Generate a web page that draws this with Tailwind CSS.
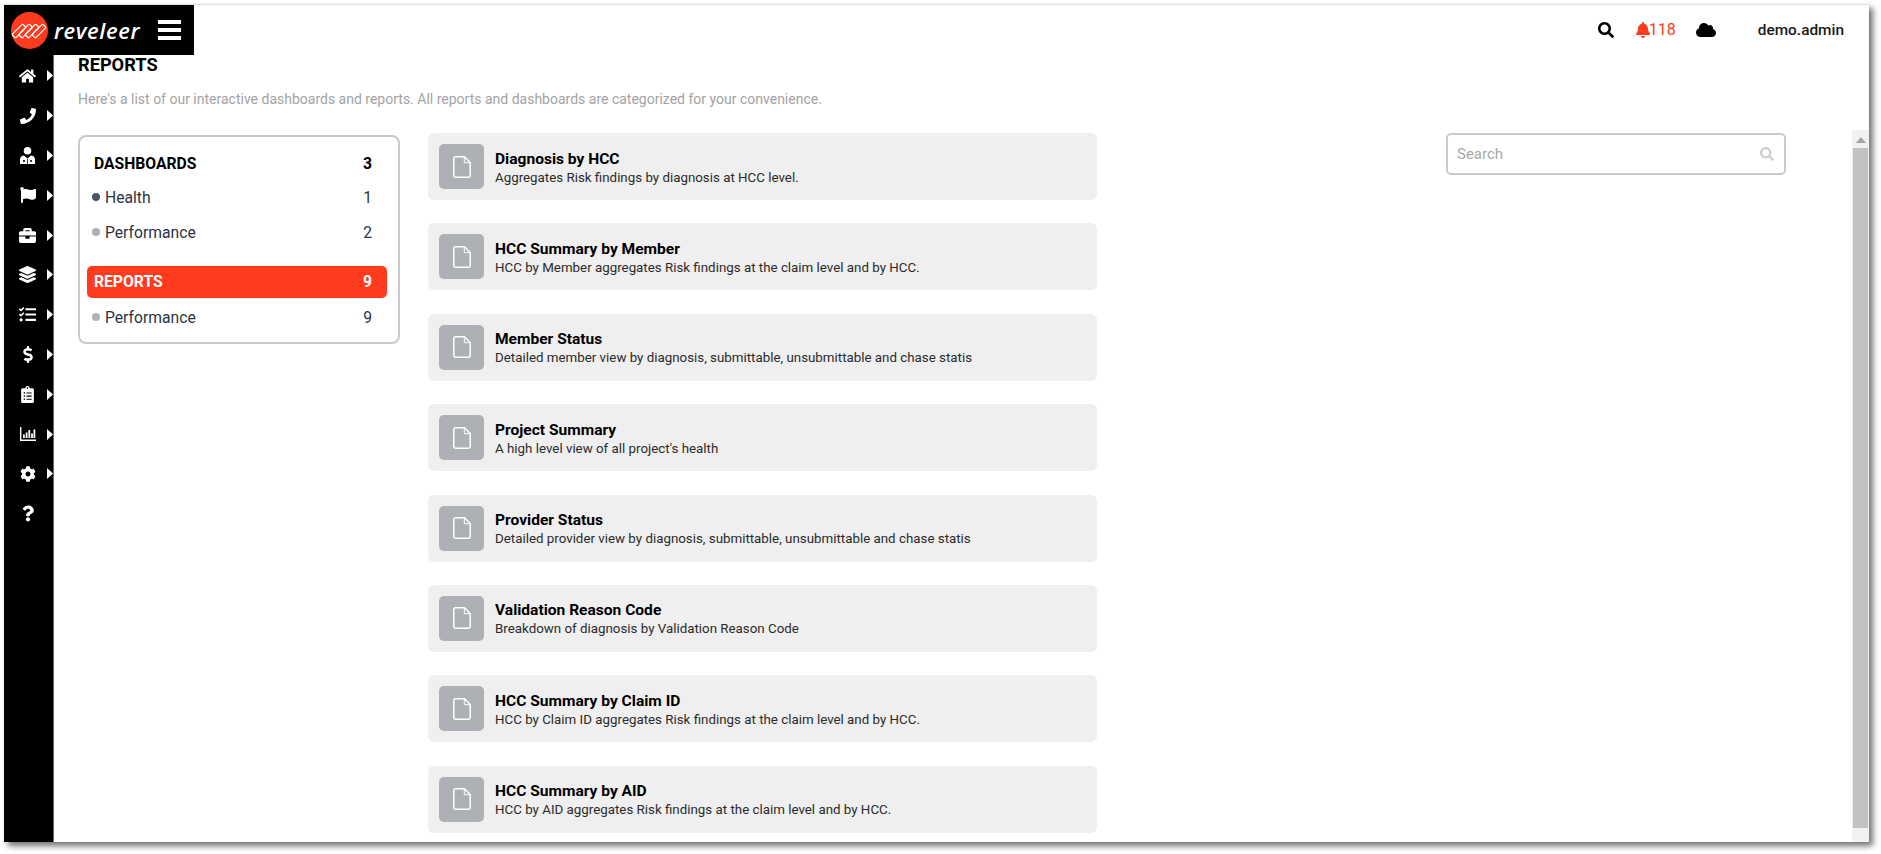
<!doctype html>
<html lang="en">
<head>
<meta charset="utf-8">
<title>Reports</title>
<script src="https://cdn.jsdelivr.net/npm/@tailwindcss/browser@4"></script>
</head>
<body class="bg-white font-['Roboto',sans-serif] overflow-hidden">
<svg width="0" height="0" class="absolute">
  <defs>
    <symbol id="doc" viewBox="0 0 18 22"><path d="M2.5 0.8H11.5L17.2 6.5V19.5A1.7 1.7 0 0 1 15.5 21.2H2.5A1.7 1.7 0 0 1 0.8 19.5V2.5A1.7 1.7 0 0 1 2.5 0.8Z" fill="none" stroke="#fff" stroke-width="1.5"/><path d="M11.3 1V6.7H17" fill="none" stroke="#fff" stroke-width="1"/></symbol>
  </defs>
</svg>
<div class="pt-1 pl-1 w-[1881px] h-[854px]">
  <div class="relative flex w-[1865px] h-[838px] bg-white border-t border-[#dfe1e8] shadow-[4px_4px_6px_rgba(0,0,0,0.55)]">

    <!-- logo block over the sidebar and page -->
    <div class="absolute left-0 top-0 z-10 flex items-center w-[190px] h-[50px] bg-black">
      <svg class="ml-[7px] shrink-0" width="37" height="37" viewBox="0 0 37 37">
        <circle cx="18.5" cy="18.5" r="18.5" fill="#ff3b1f"/>
        <g fill="none" stroke="#fff" stroke-width="1.2">
          <rect x="0.5" y="16.5" width="15" height="5" rx="1" transform="rotate(-45 8 19)"/>
          <rect x="7" y="16.5" width="15" height="5" rx="1" transform="rotate(-45 14.5 19)"/>
          <rect x="13.5" y="16.5" width="15" height="5" rx="1" transform="rotate(-45 21 19)"/>
          <rect x="20.5" y="16.5" width="15" height="5" rx="1" transform="rotate(-45 28 19)"/>
        </g>
      </svg>
      <span class="ml-[6px] w-[90px] font-['Open_Sans',sans-serif] italic font-semibold text-[22px] leading-none tracking-[0.6px] text-white">reveleer</span>
      <span class="ml-[14px] flex flex-col gap-[4px] w-[23px]">
        <span class="block h-[4px] bg-white"></span>
        <span class="block h-[4px] bg-white"></span>
        <span class="block h-[4px] bg-white"></span>
      </span>
    </div>

    <!-- sidebar -->
    <nav class="w-[50px] shrink-0 h-full bg-black border-r border-[#666] pt-[51px] flex flex-col text-white">
      <div class="h-[39.8px] flex items-center"><span class="w-[17px] ml-[15px] flex justify-center"><svg width="18" height="16" viewBox="0 0 576 512" fill="#fff"><path d="M280.37 148.26L96 300.11V464a16 16 0 0 0 16 16l112.06-.29a16 16 0 0 0 15.92-16V368a16 16 0 0 1 16-16h64a16 16 0 0 1 16 16v95.64a16 16 0 0 0 16 16.05L464 480a16 16 0 0 0 16-16V300L295.67 148.26a12.19 12.19 0 0 0-15.3 0zM571.6 251.47L488 182.56V44.05a12 12 0 0 0-12-12h-56a12 12 0 0 0-12 12v72.61L318.47 43a48 48 0 0 0-61 0L4.34 251.47a12 12 0 0 0-1.6 16.9l25.5 31A12 12 0 0 0 45.15 301l235.22-193.74a12.19 12.19 0 0 1 15.3 0L530.9 301a12 12 0 0 0 16.9-1.6l25.5-31a12 12 0 0 0-1.7-16.93z"/></svg></span><svg class="ml-[11px]" width="6" height="11" viewBox="0 0 6 11"><path d="M0 0L6 5.5L0 11Z" fill="#fff"/></svg></div>
      <div class="h-[39.8px] flex items-center"><span class="w-[17px] ml-[15px] flex justify-center"><svg width="16" height="16" viewBox="0 0 512 512" fill="#fff"><path d="M493.4 24.6l-104-24c-11.3-2.6-22.9 3.3-27.5 13.9l-48 112c-4.2 9.8-1.4 21.3 6.9 28l60.6 49.6c-36 76.7-98.9 140.5-177.2 177.2l-49.6-60.6c-6.8-8.3-18.2-11.1-28-6.9l-112 48C3.9 366.5-2 378.1.6 389.4l24 104C27.1 504.2 36.7 512 48 512c256.1 0 464-207.5 464-464 0-11.2-7.7-20.9-18.6-23.4z"/></svg></span><svg class="ml-[11px]" width="6" height="11" viewBox="0 0 6 11"><path d="M0 0L6 5.5L0 11Z" fill="#fff"/></svg></div>
      <div class="h-[39.8px] flex items-center"><span class="w-[17px] ml-[15px] flex justify-center"><svg width="15" height="17" viewBox="0 0 15 17" fill="#fff"><circle cx="7.5" cy="3.8" r="3.8"/><path d="M0 17V12.5C0 10 2 8.8 4 8.6L7.5 11.5L11 8.6C13 8.8 15 10 15 12.5V17Z"/><circle cx="4" cy="14" r="1.1" fill="#000"/><circle cx="11" cy="14" r="1.1" fill="#000"/><path d="M7.5 12V17" stroke="#000" stroke-width="0.8"/></svg></span><svg class="ml-[11px]" width="6" height="11" viewBox="0 0 6 11"><path d="M0 0L6 5.5L0 11Z" fill="#fff"/></svg></div>
      <div class="h-[39.8px] flex items-center"><span class="w-[17px] ml-[15px] flex justify-center"><svg width="16" height="16" viewBox="0 0 512 512" fill="#fff"><path d="M349.565 98.783C295.978 98.783 251.721 64 184.348 64c-24.955 0-47.309 4.384-68.045 12.013a55.947 55.947 0 0 0 3.586-23.562C118.117 24.015 94.806 1.206 66.338.048 34.345-1.254 8 24.296 8 56c0 19.026 9.497 35.825 24 45.945V488c0 13.255 10.745 24 24 24h16c13.255 0 24-10.745 24-24v-94.4c28.311-12.064 63.582-22.122 114.435-22.122 53.588 0 97.844 34.783 165.217 34.783 48.169 0 86.667-16.294 122.505-40.858C506.84 359.452 512 349.571 512 339.045v-243.1c0-23.393-24.269-38.87-45.485-29.016-34.338 15.948-76.454 31.854-116.95 31.854z"/></svg></span><svg class="ml-[11px]" width="6" height="11" viewBox="0 0 6 11"><path d="M0 0L6 5.5L0 11Z" fill="#fff"/></svg></div>
      <div class="h-[39.8px] flex items-center"><span class="w-[17px] ml-[15px] flex justify-center"><svg width="17" height="17" viewBox="0 0 512 512" fill="#fff"><path d="M320 336c0 8.84-7.16 16-16 16h-96c-8.84 0-16-7.16-16-16v-48H0v144c0 25.6 22.4 48 48 48h416c25.6 0 48-22.4 48-48V288H320v48zm144-208h-80V80c0-25.6-22.4-48-48-48H176c-25.6 0-48 22.4-48 48v48H48c-25.6 0-48 22.4-48 48v80h512v-80c0-25.6-22.4-48-48-48zm-144 0H192V96h128v32z"/></svg></span><svg class="ml-[11px]" width="6" height="11" viewBox="0 0 6 11"><path d="M0 0L6 5.5L0 11Z" fill="#fff"/></svg></div>
      <div class="h-[39.8px] flex items-center"><span class="w-[17px] ml-[15px] flex justify-center"><svg width="17" height="17" viewBox="0 0 512 512" fill="#fff"><path d="M12.41 148.02l232.94 105.67c6.8 3.09 14.49 3.09 21.29 0l232.94-105.67c16.55-7.51 16.55-32.52 0-40.03L266.65 2.31a25.607 25.607 0 0 0-21.29 0L12.41 107.98c-16.55 7.51-16.55 32.53 0 40.04zm487.18 88.28l-58.09-26.33-161.64 73.27c-7.56 3.43-15.59 5.17-23.86 5.17s-16.29-1.74-23.86-5.17L70.51 209.97l-58.1 26.33c-16.55 7.5-16.55 32.5 0 40l232.94 105.59c6.8 3.08 14.49 3.08 21.29 0L499.59 276.3c16.55-7.5 16.55-32.5 0-40zm0 127.8l-57.87-26.23-161.86 73.37c-7.56 3.43-15.59 5.17-23.86 5.17s-16.29-1.74-23.86-5.17L70.29 337.87 12.41 364.1c-16.55 7.5-16.55 32.5 0 40l232.94 105.59c6.8 3.08 14.49 3.08 21.29 0L499.59 404.1c16.55-7.5 16.55-32.5 0-40z"/></svg></span><svg class="ml-[11px]" width="6" height="11" viewBox="0 0 6 11"><path d="M0 0L6 5.5L0 11Z" fill="#fff"/></svg></div>
      <div class="h-[39.8px] flex items-center"><span class="w-[17px] ml-[15px] flex justify-center"><svg width="17" height="17" viewBox="0 0 512 512" fill="#fff"><path d="M139.61 35.5a12 12 0 0 0-17 0L58.93 98.81l-22.7-22.12a12 12 0 0 0-17 0L3.53 92.41a12 12 0 0 0 0 17l47.59 47.4a12.78 12.78 0 0 0 17.61 0l15.59-15.62L156.52 69a12.09 12.09 0 0 0 .09-17zm0 159.19a12 12 0 0 0-17 0l-63.68 63.72-22.7-22.1a12 12 0 0 0-17 0L3.53 252a12 12 0 0 0 0 17L51 316.5a12.77 12.77 0 0 0 17.6 0l15.7-15.69 72.2-72.22a12 12 0 0 0 .09-16.9zM64 368c-26.49 0-48.59 21.5-48.59 48S37.53 464 64 464a48 48 0 0 0 0-96zm432 16H208a16 16 0 0 0-16 16v32a16 16 0 0 0 16 16h288a16 16 0 0 0 16-16v-32a16 16 0 0 0-16-16zm0-320H208a16 16 0 0 0-16 16v32a16 16 0 0 0 16 16h288a16 16 0 0 0 16-16V80a16 16 0 0 0-16-16zm0 160H208a16 16 0 0 0-16 16v32a16 16 0 0 0 16 16h288a16 16 0 0 0 16-16v-32a16 16 0 0 0-16-16z"/></svg></span><svg class="ml-[11px]" width="6" height="11" viewBox="0 0 6 11"><path d="M0 0L6 5.5L0 11Z" fill="#fff"/></svg></div>
      <div class="h-[39.8px] flex items-center"><span class="w-[17px] ml-[15px] flex justify-center"><svg width="10" height="17" viewBox="0 0 288 512" fill="#fff"><path d="M209.2 233.4l-108-31.6C88.7 198.2 80 186.5 80 173.5c0-16.3 13.2-29.5 29.5-29.5h66.3c12.2 0 24.2 3.7 34.2 10.5 6.1 4.1 14.3 3.1 19.5-2l34.8-34c7.1-6.9 6.1-18.4-1.8-24.5C238 74.8 207.4 64.1 176 64V16c0-8.8-7.2-16-16-16h-32c-8.8 0-16 7.2-16 16v48h-2.5C45.8 64-5.4 118.7.5 183.6c4.2 46.1 39.4 83.6 83.8 96.6l102.5 30c12.5 3.7 21.2 15.3 21.2 28.3 0 16.3-13.2 29.5-29.5 29.5h-66.3C100 368 88 364.3 78 357.5c-6.1-4.1-14.3-3.1-19.5 2l-34.8 34c-7.1 6.9-6.1 18.4 1.8 24.5 24.5 19.2 55.1 29.9 86.5 30v48c0 8.8 7.2 16 16 16h32c8.8 0 16-7.2 16-16v-48.2c46.6-.9 90.3-28.6 105.7-72.7 21.5-61.6-14.6-124.8-72.5-141.7z"/></svg></span><svg class="ml-[11px]" width="6" height="11" viewBox="0 0 6 11"><path d="M0 0L6 5.5L0 11Z" fill="#fff"/></svg></div>
      <div class="h-[39.8px] flex items-center"><span class="w-[17px] ml-[15px] flex justify-center"><svg width="13" height="17" viewBox="0 0 384 512" fill="#fff"><path d="M336 64h-80c0-35.3-28.7-64-64-64s-64 28.7-64 64H48C21.5 64 0 85.5 0 112v352c0 26.5 21.5 48 48 48h288c26.5 0 48-21.5 48-48V112c0-26.5-21.5-48-48-48zM96 424c-13.3 0-24-10.7-24-24s10.7-24 24-24 24 10.7 24 24-10.7 24-24 24zm0-96c-13.3 0-24-10.7-24-24s10.7-24 24-24 24 10.7 24 24-10.7 24-24 24zm0-96c-13.3 0-24-10.7-24-24s10.7-24 24-24 24 10.7 24 24-10.7 24-24 24zm96-192c13.3 0 24 10.7 24 24s-10.7 24-24 24-24-10.7-24-24 10.7-24 24-24zm128 368c0 4.4-3.6 8-8 8H168c-4.4 0-8-3.6-8-8v-16c0-4.4 3.6-8 8-8h144c4.4 0 8 3.6 8 8v16zm0-96c0 4.4-3.6 8-8 8H168c-4.4 0-8-3.6-8-8v-16c0-4.4 3.6-8 8-8h144c4.4 0 8 3.6 8 8v16zm0-96c0 4.4-3.6 8-8 8H168c-4.4 0-8-3.6-8-8v-16c0-4.4 3.6-8 8-8h144c4.4 0 8 3.6 8 8v16z"/></svg></span><svg class="ml-[11px]" width="6" height="11" viewBox="0 0 6 11"><path d="M0 0L6 5.5L0 11Z" fill="#fff"/></svg></div>
      <div class="h-[39.8px] flex items-center"><span class="w-[17px] ml-[15px] flex justify-center"><svg width="16" height="14" viewBox="0 0 16 14" fill="#fff"><path d="M0 0H1.4V12.4H16V14H0Z"/><rect x="3" y="7.5" width="1.8" height="3.5"/><rect x="5.7" y="5.5" width="1.8" height="5.5"/><rect x="8.4" y="3" width="1.8" height="8"/><rect x="11.1" y="6.5" width="1.8" height="4.5"/><rect x="13.5" y="2.5" width="1.8" height="8.5"/></svg></span><svg class="ml-[11px]" width="6" height="11" viewBox="0 0 6 11"><path d="M0 0L6 5.5L0 11Z" fill="#fff"/></svg></div>
      <div class="h-[39.8px] flex items-center"><span class="w-[17px] ml-[15px] flex justify-center"><svg width="16" height="16" viewBox="0 0 512 512" fill="#fff"><path d="M487.4 315.7l-42.6-24.6c4.3-23.2 4.3-47 0-70.2l42.6-24.6c4.9-2.8 7.1-8.6 5.5-14-11.1-35.6-30-67.8-54.7-94.6-3.8-4.1-10-5.1-14.8-2.3L380.8 110c-17.9-15.4-38.5-27.3-60.8-35.1V25.8c0-5.6-3.9-10.5-9.4-11.7-36.7-8.2-74.3-7.8-109.2 0-5.5 1.2-9.4 6.1-9.4 11.7V75c-22.2 7.9-42.8 19.8-60.8 35.1L88.7 85.5c-4.9-2.8-11-1.9-14.8 2.3-24.7 26.7-43.6 58.9-54.7 94.6-1.7 5.4.6 11.2 5.5 14L67.3 221c-4.3 23.2-4.3 47 0 70.2l-42.6 24.6c-4.9 2.8-7.1 8.6-5.5 14 11.1 35.6 30 67.8 54.7 94.6 3.8 4.1 10 5.1 14.8 2.3l42.6-24.6c17.9 15.4 38.5 27.3 60.8 35.1v49.2c0 5.6 3.9 10.5 9.4 11.7 36.7 8.2 74.3 7.8 109.2 0 5.5-1.2 9.4-6.1 9.4-11.7v-49.2c22.2-7.9 42.8-19.8 60.8-35.1l42.6 24.6c4.9 2.8 11 1.9 14.8-2.3 24.7-26.7 43.6-58.9 54.7-94.6 1.5-5.5-.7-11.3-5.6-14.1zM256 336c-44.1 0-80-35.9-80-80s35.9-80 80-80 80 35.9 80 80-35.9 80-80 80z"/></svg></span><svg class="ml-[11px]" width="6" height="11" viewBox="0 0 6 11"><path d="M0 0L6 5.5L0 11Z" fill="#fff"/></svg></div>
      <div class="h-[39.8px] flex items-center"><span class="w-[17px] ml-[15px] flex justify-center"><svg width="12" height="17" viewBox="0 0 384 512" fill="#fff"><path d="M202.021 0C122.202 0 70.503 32.703 29.914 91.026c-7.363 10.58-5.093 25.086 5.178 32.874l43.138 32.709c10.373 7.865 25.132 6.026 33.253-4.148 25.049-31.381 43.63-49.449 82.757-49.449 30.764 0 68.816 19.799 68.816 49.631 0 22.552-18.617 34.134-48.993 51.164-35.423 19.86-82.299 44.576-82.299 106.405V320c0 13.255 10.745 24 24 24h72.471c13.255 0 24-10.745 24-24v-5.773c0-42.86 125.268-44.645 125.268-160.627C377.504 66.256 286.902 0 202.021 0zM192 373.459c-38.196 0-69.271 31.075-69.271 69.271 0 38.195 31.075 69.27 69.271 69.27s69.271-31.075 69.271-69.271-31.075-69.27-69.271-69.27z"/></svg></span></div>
    </nav>

    <!-- main -->
    <main class="flex-1 min-w-0 flex flex-col">
      <header class="h-[49px] shrink-0 flex items-center justify-end text-[#1a1a1a]">
        <svg width="16" height="16" viewBox="0 0 512 512" fill="#000"><path d="M505 442.7L405.3 343c-4.5-4.5-10.6-7-17-7H372c27.6-35.3 44-79.7 44-128C416 93.1 322.9 0 208 0S0 93.1 0 208s93.1 208 208 208c48.3 0 92.7-16.4 128-44v16.3c0 6.4 2.5 12.5 7 17l99.7 99.7c9.4 9.4 24.6 9.4 33.9 0l28.3-28.3c9.4-9.4 9.4-24.6.1-34zM208 336c-70.7 0-128-57.2-128-128 0-70.7 57.2-128 128-128 70.7 0 128 57.2 128 128 0 70.7-57.2 128-128 128z"/></svg>
        <svg class="ml-[22px]" width="14" height="16" viewBox="0 0 448 512" fill="#ff3b1f"><path d="M224 512c35.32 0 63.97-28.65 63.97-64H160.03c0 35.35 28.65 64 63.97 64zm215.39-149.71c-19.32-20.76-55.47-51.99-55.47-154.29 0-77.7-54.48-139.9-127.94-155.16V32c0-17.67-14.32-32-31.98-32s-31.98 14.33-31.98 32v20.84C118.56 68.1 64.08 130.3 64.08 208c0 102.3-36.15 133.53-55.47 154.29-6 6.45-8.66 14.16-8.61 21.71.11 16.4 12.98 32 32.1 32h383.8c19.12 0 32-15.6 32.1-32 .05-7.55-2.61-15.27-8.61-21.71z"/></svg>
        <span class="-ml-[1px] text-[16px] text-[#ff3b1f]">118</span>
        <svg class="ml-[20px]" width="20" height="16" viewBox="0 0 640 512" fill="#000"><path d="M537.6 226.6c4.1-10.7 6.4-22.4 6.4-34.6 0-53-43-96-96-96-19.7 0-38.1 6-53.3 16.2C367 64.2 315.3 32 256 32c-88.4 0-160 71.6-160 160 0 2.7.1 5.4.2 8.1C40.2 219.8 0 273.2 0 336c0 79.5 64.5 144 144 144h368c70.7 0 128-57.3 128-128 0-61.9-44-113.6-102.4-125.4z"/></svg>
        <span class="ml-[42px] mr-[25px] mt-[2px] text-[15.4px] font-medium">demo.admin</span>
      </header>

      <div class="flex-1 min-h-0 flex flex-col">
        <div class="pl-[24px]">
          <h1 class="-mt-[1px] text-[18.2px] leading-[24px] font-bold text-black">REPORTS</h1>
          <p class="mt-[12px] text-[14px] leading-[20px] text-[#a3a3a3]">Here's a list of our interactive dashboards and reports. All reports and dashboards are categorized for your convenience.</p>
        </div>
        <div class="flex-1 min-h-0 flex mt-[24px] relative">
          <!-- categories -->
          <aside class="ml-[24px] w-[322px] h-[209px] mt-[2px] shrink-0 border-2 border-[#c9c9c9] rounded-[8px] pl-[7px] pr-[11px] pt-[10px] text-[15.7px] text-[#2b3442]">
            <div class="h-[33px] pl-[7px] pr-[15px] flex items-center justify-between font-bold text-black"><span>DASHBOARDS</span><span>3</span></div>
            <div class="h-[35px] pr-[15px] flex items-center justify-between"><span class="flex items-center"><span class="ml-[5px] mr-[5px] w-2 h-2 rounded-full bg-[#4a5563]"></span>Health</span><span>1</span></div>
            <div class="h-[35px] pr-[15px] flex items-center justify-between"><span class="flex items-center"><span class="ml-[5px] mr-[5px] w-2 h-2 rounded-full bg-[#adb0b5]"></span>Performance</span><span>2</span></div>
            <div class="mt-[16px] h-[32px] pl-[7px] pr-[15px] rounded-[5px] bg-[#ff3b1f] flex items-center justify-between font-bold text-white"><span>REPORTS</span><span>9</span></div>
            <div class="h-[39px] pr-[15px] flex items-center justify-between"><span class="flex items-center"><span class="ml-[5px] mr-[5px] w-2 h-2 rounded-full bg-[#adb0b5]"></span>Performance</span><span>9</span></div>
          </aside>

          <!-- reports -->
          <section class="ml-[28px] w-[669px] shrink-0 flex flex-col gap-[23.4px]">
            <article class="h-[67px] shrink-0 bg-[#efefef] rounded-[6px] flex items-center pl-[11px]"><span class="w-[45px] h-[45px] rounded-[5px] bg-[#adb0b5] flex items-center justify-center"><svg width="18" height="22"><use href="#doc"/></svg></span><div class="ml-[11px] pt-[3px]"><h2 class="text-[15.55px] leading-[19px] font-bold text-black">Diagnosis by HCC</h2><p class="text-[13.33px] leading-[18px] text-[#2b2b2b]">Aggregates Risk findings by diagnosis at HCC level.</p></div></article>
            <article class="h-[67px] shrink-0 bg-[#efefef] rounded-[6px] flex items-center pl-[11px]"><span class="w-[45px] h-[45px] rounded-[5px] bg-[#adb0b5] flex items-center justify-center"><svg width="18" height="22"><use href="#doc"/></svg></span><div class="ml-[11px] pt-[3px]"><h2 class="text-[15.55px] leading-[19px] font-bold text-black">HCC Summary by Member</h2><p class="text-[13.33px] leading-[18px] text-[#2b2b2b]">HCC by Member aggregates Risk findings at the claim level and by HCC.</p></div></article>
            <article class="h-[67px] shrink-0 bg-[#efefef] rounded-[6px] flex items-center pl-[11px]"><span class="w-[45px] h-[45px] rounded-[5px] bg-[#adb0b5] flex items-center justify-center"><svg width="18" height="22"><use href="#doc"/></svg></span><div class="ml-[11px] pt-[3px]"><h2 class="text-[15.55px] leading-[19px] font-bold text-black">Member Status</h2><p class="text-[13.33px] leading-[18px] text-[#2b2b2b]">Detailed member view by diagnosis, submittable, unsubmittable and chase statis</p></div></article>
            <article class="h-[67px] shrink-0 bg-[#efefef] rounded-[6px] flex items-center pl-[11px]"><span class="w-[45px] h-[45px] rounded-[5px] bg-[#adb0b5] flex items-center justify-center"><svg width="18" height="22"><use href="#doc"/></svg></span><div class="ml-[11px] pt-[3px]"><h2 class="text-[15.55px] leading-[19px] font-bold text-black">Project Summary</h2><p class="text-[13.33px] leading-[18px] text-[#2b2b2b]">A high level view of all project's health</p></div></article>
            <article class="h-[67px] shrink-0 bg-[#efefef] rounded-[6px] flex items-center pl-[11px]"><span class="w-[45px] h-[45px] rounded-[5px] bg-[#adb0b5] flex items-center justify-center"><svg width="18" height="22"><use href="#doc"/></svg></span><div class="ml-[11px] pt-[3px]"><h2 class="text-[15.55px] leading-[19px] font-bold text-black">Provider Status</h2><p class="text-[13.33px] leading-[18px] text-[#2b2b2b]">Detailed provider view by diagnosis, submittable, unsubmittable and chase statis</p></div></article>
            <article class="h-[67px] shrink-0 bg-[#efefef] rounded-[6px] flex items-center pl-[11px]"><span class="w-[45px] h-[45px] rounded-[5px] bg-[#adb0b5] flex items-center justify-center"><svg width="18" height="22"><use href="#doc"/></svg></span><div class="ml-[11px] pt-[3px]"><h2 class="text-[15.55px] leading-[19px] font-bold text-black">Validation Reason Code</h2><p class="text-[13.33px] leading-[18px] text-[#2b2b2b]">Breakdown of diagnosis by Validation Reason Code</p></div></article>
            <article class="h-[67px] shrink-0 bg-[#efefef] rounded-[6px] flex items-center pl-[11px]"><span class="w-[45px] h-[45px] rounded-[5px] bg-[#adb0b5] flex items-center justify-center"><svg width="18" height="22"><use href="#doc"/></svg></span><div class="ml-[11px] pt-[3px]"><h2 class="text-[15.55px] leading-[19px] font-bold text-black">HCC Summary by Claim ID</h2><p class="text-[13.33px] leading-[18px] text-[#2b2b2b]">HCC by Claim ID aggregates Risk findings at the claim level and by HCC.</p></div></article>
            <article class="h-[67px] shrink-0 bg-[#efefef] rounded-[6px] flex items-center pl-[11px]"><span class="w-[45px] h-[45px] rounded-[5px] bg-[#adb0b5] flex items-center justify-center"><svg width="18" height="22"><use href="#doc"/></svg></span><div class="ml-[11px] pt-[3px]"><h2 class="text-[15.55px] leading-[19px] font-bold text-black">HCC Summary by AID</h2><p class="text-[13.33px] leading-[18px] text-[#2b2b2b]">HCC by AID aggregates Risk findings at the claim level and by HCC.</p></div></article>
          </section>

          <!-- search -->
          <div class="ml-[349px] w-[340px] h-[42px] shrink-0 border-2 border-[#c9c9c9] rounded-[5px] flex items-center justify-between pl-[9px] pr-[10px]">
            <span class="text-[15px] text-[#a8a8a8]">Search</span>
            <svg width="14" height="14" viewBox="0 0 512 512" fill="#cfcfcf"><path d="M505 442.7L405.3 343c-4.5-4.5-10.6-7-17-7H372c27.6-35.3 44-79.7 44-128C416 93.1 322.9 0 208 0S0 93.1 0 208s93.1 208 208 208c48.3 0 92.7-16.4 128-44v16.3c0 6.4 2.5 12.5 7 17l99.7 99.7c9.4 9.4 24.6 9.4 33.9 0l28.3-28.3c9.4-9.4 9.4-24.6.1-34zM208 336c-70.7 0-128-57.2-128-128 0-70.7 57.2-128 128-128 70.7 0 128 57.2 128 128 0 70.7-57.2 128-128 128z"/></svg>
          </div>

          <!-- scrollbar -->
          <div class="ml-auto w-[17px] h-[712px] -mt-[3px] shrink-0 bg-[#f1f1f1] flex flex-col items-center">
            <svg class="mt-[7px] mb-[5px]" width="10" height="6" viewBox="0 0 10 6"><path d="M0 6L5 0L10 6Z" fill="#a3a3a3"/></svg>
            <div class="w-[15px] flex-1 mb-[14px] bg-[#c1c1c1]"></div>
          </div>
        </div>
      </div>
    </main>
  </div>
</div>
</body>
</html>
